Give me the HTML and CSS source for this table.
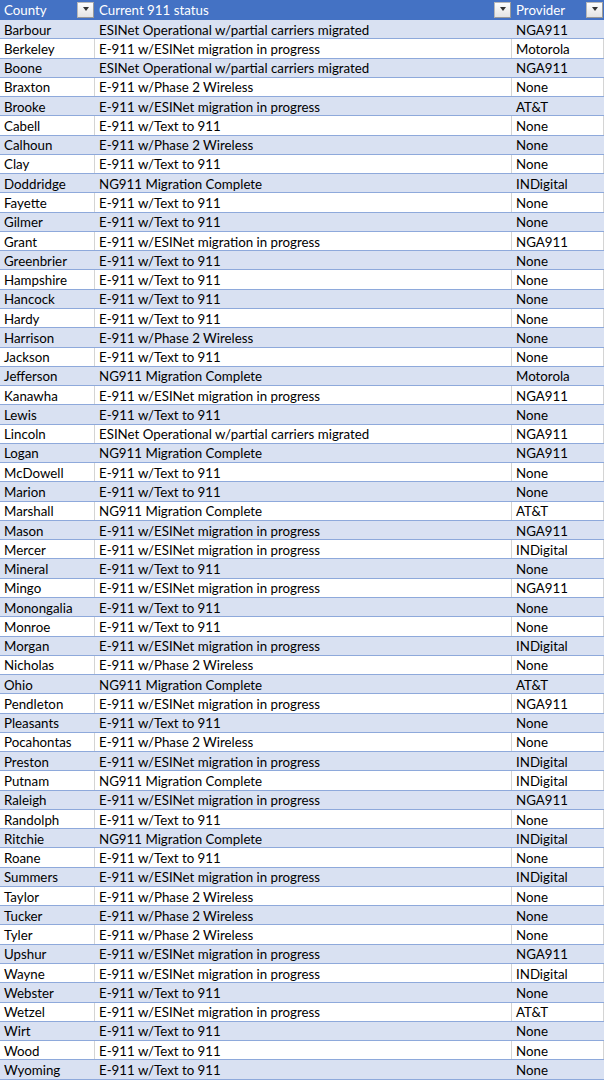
FILE: index.html
```html
<!DOCTYPE html>
<html>
<head>
<meta charset="utf-8">
<link rel="stylesheet" href="styles.css">
</head>
<body>
<div class="sheet">
  <div class="row head">
    <div class="cell hcell"><span>County</span><span class="dd"><i></i></span></div>
    <div class="cell hcell"><span>Current 911 status</span><span class="dd"><i></i></span></div>
    <div class="cell hcell"><span>Provider</span><span class="dd"><i></i></span></div>
  </div>
  <div class="row band"><div class="cell">Barbour</div><div class="cell">ESINet Operational w/partial carriers migrated</div><div class="cell">NGA911</div></div>
  <div class="row"><div class="cell">Berkeley</div><div class="cell">E-911 w/ESINet migration in progress</div><div class="cell">Motorola</div></div>
  <div class="row band"><div class="cell">Boone</div><div class="cell">ESINet Operational w/partial carriers migrated</div><div class="cell">NGA911</div></div>
  <div class="row"><div class="cell">Braxton</div><div class="cell">E-911 w/Phase 2 Wireless</div><div class="cell">None</div></div>
  <div class="row band"><div class="cell">Brooke</div><div class="cell">E-911 w/ESINet migration in progress</div><div class="cell">AT&amp;T</div></div>
  <div class="row"><div class="cell">Cabell</div><div class="cell">E-911 w/Text to 911</div><div class="cell">None</div></div>
  <div class="row band"><div class="cell">Calhoun</div><div class="cell">E-911 w/Phase 2 Wireless</div><div class="cell">None</div></div>
  <div class="row"><div class="cell">Clay</div><div class="cell">E-911 w/Text to 911</div><div class="cell">None</div></div>
  <div class="row band"><div class="cell">Doddridge</div><div class="cell">NG911 Migration Complete</div><div class="cell">INDigital</div></div>
  <div class="row"><div class="cell">Fayette</div><div class="cell">E-911 w/Text to 911</div><div class="cell">None</div></div>
  <div class="row band"><div class="cell">Gilmer</div><div class="cell">E-911 w/Text to 911</div><div class="cell">None</div></div>
  <div class="row"><div class="cell">Grant</div><div class="cell">E-911 w/ESINet migration in progress</div><div class="cell">NGA911</div></div>
  <div class="row band"><div class="cell">Greenbrier</div><div class="cell">E-911 w/Text to 911</div><div class="cell">None</div></div>
  <div class="row"><div class="cell">Hampshire</div><div class="cell">E-911 w/Text to 911</div><div class="cell">None</div></div>
  <div class="row band"><div class="cell">Hancock</div><div class="cell">E-911 w/Text to 911</div><div class="cell">None</div></div>
  <div class="row"><div class="cell">Hardy</div><div class="cell">E-911 w/Text to 911</div><div class="cell">None</div></div>
  <div class="row band"><div class="cell">Harrison</div><div class="cell">E-911 w/Phase 2 Wireless</div><div class="cell">None</div></div>
  <div class="row"><div class="cell">Jackson</div><div class="cell">E-911 w/Text to 911</div><div class="cell">None</div></div>
  <div class="row band"><div class="cell">Jefferson</div><div class="cell">NG911 Migration Complete</div><div class="cell">Motorola</div></div>
  <div class="row"><div class="cell">Kanawha</div><div class="cell">E-911 w/ESINet migration in progress</div><div class="cell">NGA911</div></div>
  <div class="row band"><div class="cell">Lewis</div><div class="cell">E-911 w/Text to 911</div><div class="cell">None</div></div>
  <div class="row"><div class="cell">Lincoln</div><div class="cell">ESINet Operational w/partial carriers migrated</div><div class="cell">NGA911</div></div>
  <div class="row band"><div class="cell">Logan</div><div class="cell">NG911 Migration Complete</div><div class="cell">NGA911</div></div>
  <div class="row"><div class="cell">McDowell</div><div class="cell">E-911 w/Text to 911</div><div class="cell">None</div></div>
  <div class="row band"><div class="cell">Marion</div><div class="cell">E-911 w/Text to 911</div><div class="cell">None</div></div>
  <div class="row"><div class="cell">Marshall</div><div class="cell">NG911 Migration Complete</div><div class="cell">AT&amp;T</div></div>
  <div class="row band"><div class="cell">Mason</div><div class="cell">E-911 w/ESINet migration in progress</div><div class="cell">NGA911</div></div>
  <div class="row"><div class="cell">Mercer</div><div class="cell">E-911 w/ESINet migration in progress</div><div class="cell">INDigital</div></div>
  <div class="row band"><div class="cell">Mineral</div><div class="cell">E-911 w/Text to 911</div><div class="cell">None</div></div>
  <div class="row"><div class="cell">Mingo</div><div class="cell">E-911 w/ESINet migration in progress</div><div class="cell">NGA911</div></div>
  <div class="row band"><div class="cell">Monongalia</div><div class="cell">E-911 w/Text to 911</div><div class="cell">None</div></div>
  <div class="row"><div class="cell">Monroe</div><div class="cell">E-911 w/Text to 911</div><div class="cell">None</div></div>
  <div class="row band"><div class="cell">Morgan</div><div class="cell">E-911 w/ESINet migration in progress</div><div class="cell">INDigital</div></div>
  <div class="row"><div class="cell">Nicholas</div><div class="cell">E-911 w/Phase 2 Wireless</div><div class="cell">None</div></div>
  <div class="row band"><div class="cell">Ohio</div><div class="cell">NG911 Migration Complete</div><div class="cell">AT&amp;T</div></div>
  <div class="row"><div class="cell">Pendleton</div><div class="cell">E-911 w/ESINet migration in progress</div><div class="cell">NGA911</div></div>
  <div class="row band"><div class="cell">Pleasants</div><div class="cell">E-911 w/Text to 911</div><div class="cell">None</div></div>
  <div class="row"><div class="cell">Pocahontas</div><div class="cell">E-911 w/Phase 2 Wireless</div><div class="cell">None</div></div>
  <div class="row band"><div class="cell">Preston</div><div class="cell">E-911 w/ESINet migration in progress</div><div class="cell">INDigital</div></div>
  <div class="row"><div class="cell">Putnam</div><div class="cell">NG911 Migration Complete</div><div class="cell">INDigital</div></div>
  <div class="row band"><div class="cell">Raleigh</div><div class="cell">E-911 w/ESINet migration in progress</div><div class="cell">NGA911</div></div>
  <div class="row"><div class="cell">Randolph</div><div class="cell">E-911 w/Text to 911</div><div class="cell">None</div></div>
  <div class="row band"><div class="cell">Ritchie</div><div class="cell">NG911 Migration Complete</div><div class="cell">INDigital</div></div>
  <div class="row"><div class="cell">Roane</div><div class="cell">E-911 w/Text to 911</div><div class="cell">None</div></div>
  <div class="row band"><div class="cell">Summers</div><div class="cell">E-911 w/ESINet migration in progress</div><div class="cell">INDigital</div></div>
  <div class="row"><div class="cell">Taylor</div><div class="cell">E-911 w/Phase 2 Wireless</div><div class="cell">None</div></div>
  <div class="row band"><div class="cell">Tucker</div><div class="cell">E-911 w/Phase 2 Wireless</div><div class="cell">None</div></div>
  <div class="row"><div class="cell">Tyler</div><div class="cell">E-911 w/Phase 2 Wireless</div><div class="cell">None</div></div>
  <div class="row band"><div class="cell">Upshur</div><div class="cell">E-911 w/ESINet migration in progress</div><div class="cell">NGA911</div></div>
  <div class="row"><div class="cell">Wayne</div><div class="cell">E-911 w/ESINet migration in progress</div><div class="cell">INDigital</div></div>
  <div class="row band"><div class="cell">Webster</div><div class="cell">E-911 w/Text to 911</div><div class="cell">None</div></div>
  <div class="row"><div class="cell">Wetzel</div><div class="cell">E-911 w/ESINet migration in progress</div><div class="cell">AT&amp;T</div></div>
  <div class="row band"><div class="cell">Wirt</div><div class="cell">E-911 w/Text to 911</div><div class="cell">None</div></div>
  <div class="row"><div class="cell">Wood</div><div class="cell">E-911 w/Text to 911</div><div class="cell">None</div></div>
  <div class="row band"><div class="cell">Wyoming</div><div class="cell">E-911 w/Text to 911</div><div class="cell">None</div></div>
</div>
</body>
</html>
```

FILE: styles.css
```css
html, body {
  margin: 0;
  padding: 0;
  background: #ffffff;
}
.sheet {
  width: 604px;
  font-family: "Lato", "Liberation Sans", sans-serif;
  font-size: 13.3px;
  color: #000000;
}
.row {
  display: grid;
  grid-template-columns: 95px 417px 92px;
  height: 19.28px;
  box-sizing: border-box;
  border-bottom: 1px solid #8ea9db;
  background: #ffffff;
}
.row.band {
  background: #d9e1f2;
}
.row.head {
  height: 20px;
  background: #4472c4;
  border-bottom: none;
  color: #ffffff;
}
.cell {
  display: flex;
  align-items: center;
  padding-left: 4px;
  padding-top: 1px;
  box-sizing: border-box;
  white-space: nowrap;
  overflow: hidden;
  border-right: 1px solid #d4d4d4;
}
.row.band .cell {
  border-right-color: transparent;
}
.row.head .cell {
  border-right: none;
  padding-top: 0;
}
.hcell {
  justify-content: space-between;
  padding-right: 1px;
}
.dd {
  width: 17px;
  height: 16px;
  box-sizing: border-box;
  border: 1px solid #b8b8b8;
  border-right-color: #9a9a9a;
  border-bottom-color: #9a9a9a;
  background: linear-gradient(#fdfdfd, #e4e4e4);
  display: flex;
  align-items: center;
  justify-content: center;
}
.dd i {
  width: 0;
  height: 0;
  border-left: 3.5px solid transparent;
  border-right: 3.5px solid transparent;
  border-top: 4px solid #333333;
  margin-top: -2px;
}
```
